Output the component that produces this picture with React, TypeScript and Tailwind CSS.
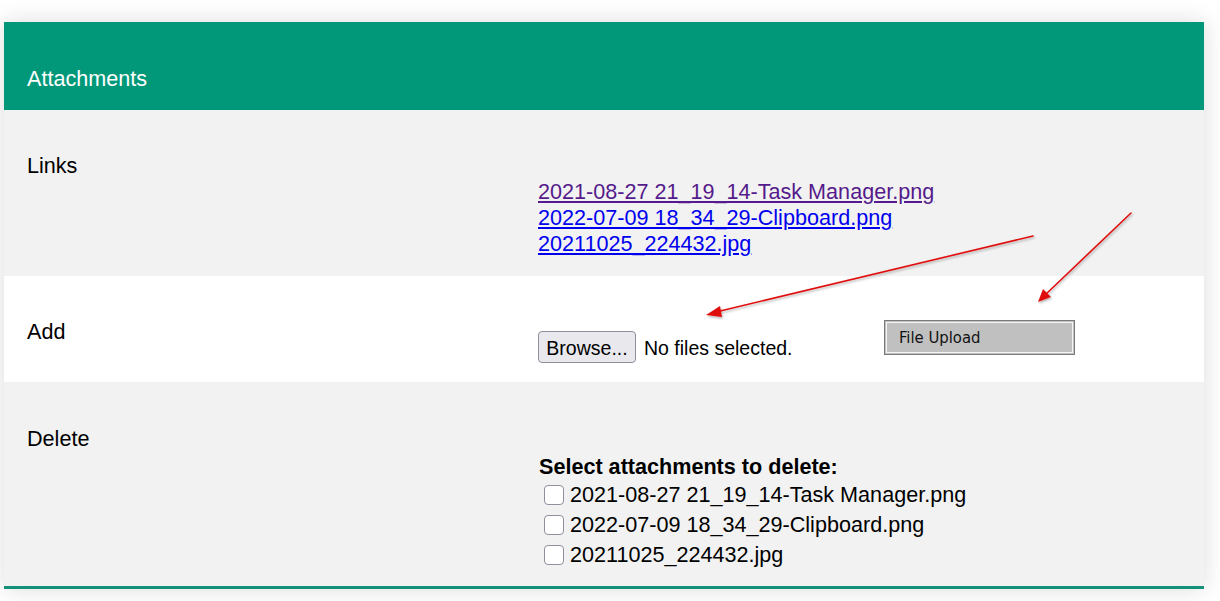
import React from 'react';

const links = [
  { name: '2021-08-27 21_19_14-Task Manager.png', visited: true },
  { name: '2022-07-09 18_34_29-Clipboard.png', visited: false },
  { name: '20211025_224432.jpg', visited: false },
];

const Arrows: React.FC = () => (
  <svg className="pointer-events-none absolute left-0 top-0" width="1220" height="601" viewBox="0 0 1220 601">
    <defs>
      <filter id="sh" x="-10%" y="-10%" width="120%" height="120%">
        <feDropShadow dx="1" dy="1.5" stdDeviation="1.2" floodColor="#000" floodOpacity="0.3" />
      </filter>
    </defs>
    <g filter="url(#sh)" stroke="#e01010" fill="#e01010" strokeWidth="1.6" strokeLinecap="round">
      <line x1="1033" y1="236" x2="716" y2="312" />
      <polygon points="706,315 720,306 722,317" stroke="none" />
      <line x1="1131" y1="213" x2="1045" y2="295" />
      <polygon points="1038,302 1043,289 1051,297" stroke="none" />
    </g>
  </svg>
);

export default function App() {
  return (
    <div
      className="relative h-[601px] w-[1220px] overflow-hidden bg-white text-[21.6px] text-black"
      style={{ fontFamily: '"Liberation Sans", Arial, sans-serif' }}
    >
      <div className="ml-[4px] mt-[22px] w-[1200px] bg-[#f3f3f3] shadow-[0_0_22px_rgba(0,0,0,0.14)]">
        <div className="h-[88px] bg-[#009879] px-[23px] pt-[45px] leading-[24px] text-white">Attachments</div>

        <div className="flex h-[166px] bg-[#f2f2f2]">
          <div className="w-[534px] pl-[23px] pt-[44px] leading-[24px]">Links</div>
          <div className="flex flex-col pt-[69px] leading-[26px]">
            {links.map((l) => (
              <a
                key={l.name}
                href="#"
                className={l.visited ? 'text-[#551a8b] underline' : 'text-[#0000ee] underline'}
              >
                {l.name}
              </a>
            ))}
          </div>
        </div>

        <div className="flex h-[106px] bg-white">
          <div className="w-[534px] pl-[23px] pt-[44px] leading-[24px]">Add</div>
          <div className="flex items-start pt-[44px]">
            <div className="mt-[11px] flex w-[346px] items-center gap-[8px] text-[19.5px]">
              <button className="h-[32px] w-[98px] rounded-[4px] border border-[#8f8f9d] bg-[#e9e9ed] pt-[2px] leading-[23px]">
                Browse...
              </button>
              <span className="pt-[3px]">No files selected.</span>
            </div>
            <div className="h-[35px] w-[191px] border border-[#7a7a7a] bg-[#c0c0c0] p-px">
              <div
                className="h-full border border-[#f4f4f4] pl-[12px] pt-[5px] text-[16.5px] leading-[20px] text-[#111]"
                style={{ fontFamily: 'Tahoma, "DejaVu Sans Condensed", "Liberation Sans", sans-serif' }}
              >
                File Upload
              </div>
            </div>
          </div>
        </div>

        <div className="flex h-[204px] bg-[#f2f2f2]">
          <div className="w-[534px] pl-[23px] pt-[45px] leading-[24px]">Delete</div>
          <div className="pt-[71px]">
            <div className="pl-px font-bold leading-[27px]">Select attachments to delete:</div>
            {links.map((l) => (
              <label key={l.name} className="flex h-[30px] items-center">
                <input
                  type="checkbox"
                  className="ml-[6px] mr-[6px] h-[20px] w-[20px] appearance-none rounded-[4px] border border-[#8f8f9d] bg-white"
                />
                <span className="leading-[24px]">{l.name}</span>
              </label>
            ))}
          </div>
        </div>

        <div className="h-[3px] bg-[#169179]" />
      </div>
      <Arrows />
    </div>
  );
}
